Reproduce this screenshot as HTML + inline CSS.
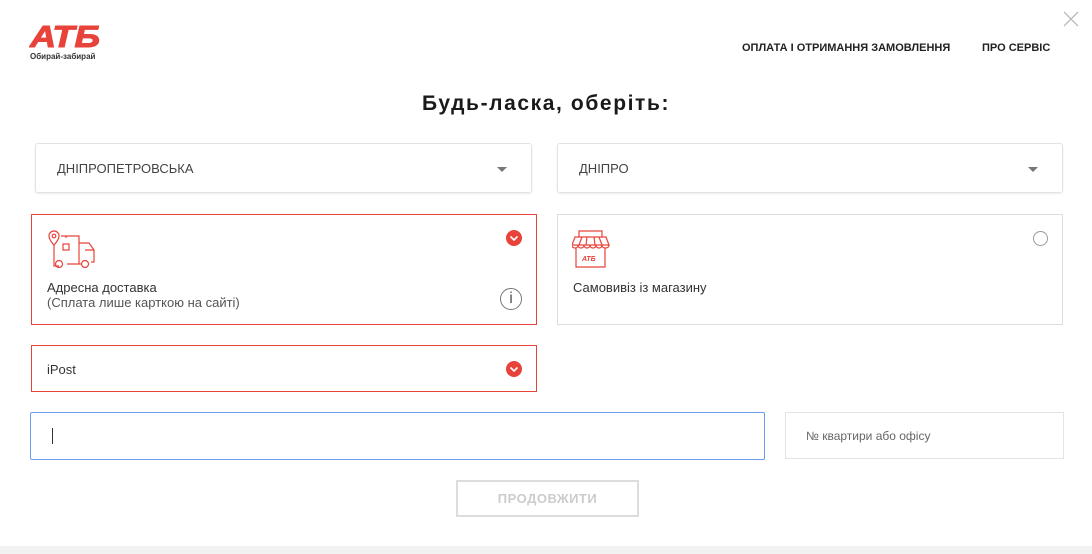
<!DOCTYPE html>
<html><head><meta charset="utf-8"><style>
*{box-sizing:border-box;margin:0;padding:0}
body{width:1092px;height:554px;background:#fff;font-family:"Liberation Sans",sans-serif;color:#333;position:relative;overflow:hidden}
.abs{position:absolute}
.sel{position:absolute;border:1px solid #e3e3e3;border-radius:3px;box-shadow:0 1px 2px rgba(0,0,0,.08);font-size:13px;color:#444;padding-left:21px;display:flex;align-items:center}
.tri{position:absolute;right:24px;top:23px;width:0;height:0;border-left:5px solid transparent;border-right:5px solid transparent;border-top:5px solid #777}
.card{position:absolute;border:1px solid #ddd}
.red{border-color:#e8433a}
.chev{position:absolute;width:16px;height:16px;border-radius:50%;background:#e8433a}
</style></head><body>
<svg class="abs" style="left:29px;top:22px" width="74" height="28" viewBox="0 0 74 28">
<text x="1" y="25" font-family="Liberation Sans" font-weight="bold" font-style="italic" font-size="31" fill="#e8433a" textLength="70" lengthAdjust="spacingAndGlyphs" stroke="#e8433a" stroke-width="1">АТБ</text></svg>
<div class="abs" style="left:30px;top:52px;font-size:8px;font-weight:bold;color:#333">Обирай-забирай</div>
<div class="abs" style="left:742px;top:42px;font-size:11px;font-weight:bold;color:#222">ОПЛАТА І ОТРИМАННЯ ЗАМОВЛЕННЯ</div>
<div class="abs" style="left:982px;top:42px;font-size:11px;font-weight:bold;color:#222">ПРО СЕРВІС</div>
<svg class="abs" style="left:1063px;top:11px" width="16" height="16"><path d="M1 1L15 15M15 1L1 15" stroke="#bbb" stroke-width="1.3"/></svg>
<div class="abs" style="left:0;width:1092px;top:92px;text-align:center;font-size:21px;font-weight:bold;color:#1a1a1a;letter-spacing:1.6px">Будь-ласка, оберіть:</div>
<div class="sel" style="left:35px;top:143px;width:497px;height:50px">ДНІПРОПЕТРОВСЬКА<span class="tri"></span></div>
<div class="sel" style="left:557px;top:143px;width:506px;height:50px">ДНІПРО<span class="tri"></span></div>
<div class="card red" style="left:31px;top:214px;width:506px;height:111px">
<svg class="abs" style="left:15px;top:15px" width="50" height="38" viewBox="0 0 50 38" fill="none" stroke="#e8433a" stroke-width="1.2"><path d="M7 1a5 5 0 0 1 5 5c0 4-5 9-5 9s-5-5-5-9a5 5 0 0 1 5-5z"/><circle cx="7" cy="6" r="1.8"/><path d="M7 15v21h5M19 8v-2h-5M14 6h18v28H20M16 14h6v6h-6zM32 13h10l5 7v12h-3M28 34h7M47 20H38"/><circle cx="12" cy="34" r="3.5"/><circle cx="38" cy="34" r="3.5"/></svg>
<div class="chev" style="left:474px;top:15px"><svg width="16" height="16"><path d="M4.5 6.5L8 10l3.5-3.5" stroke="#fff" stroke-width="1.6" fill="none"/></svg></div>
<div class="abs" style="left:15px;top:65px;font-size:13px;color:#333;line-height:15px">Адресна доставка<br><span style="color:#555">(Сплата лише карткою на сайті)</span></div>
<div class="abs" style="left:468px;top:73px;width:22px;height:22px;border:1px solid #777;border-radius:50%;text-align:center;font-size:16px;line-height:20px;color:#555">i</div>
</div>
<div class="card" style="left:557px;top:214px;width:506px;height:111px">
<svg class="abs" style="left:14px;top:15px" width="38" height="40" viewBox="0 0 38 40" fill="none" stroke="#e8433a" stroke-width="1.2"><path d="M7 1h23v6H7zM3 7h31l3 8H0zM0 15c0 4 6 4 6 0c0 4 6 4 6 0c0 4 6 4 6 0c0 4 6 4 6 0c0 4 6 4 6 0c0 4 7 4 7 0M4 18v19h29V18M10 7l-3 8M15 7l-1 8M22 7l1 8M27 7l3 8"/><text x="10" y="31" font-size="7" font-weight="bold" font-style="italic" fill="#e8433a" stroke="none" font-family="Liberation Sans">АТБ</text></svg>
<div class="abs" style="left:475px;top:16px;width:15px;height:15px;border:1px solid #999;border-radius:50%"></div>
<div class="abs" style="left:15px;top:65px;font-size:13px;color:#333">Самовивіз із магазину</div>
</div>
<div class="card red" style="left:31px;top:345px;width:506px;height:47px">
<div class="abs" style="left:15px;top:16px;font-size:13px">iPost</div>
<div class="chev" style="left:474px;top:15px"><svg width="16" height="16"><path d="M4.5 6.5L8 10l3.5-3.5" stroke="#fff" stroke-width="1.6" fill="none"/></svg></div>
</div>
<div class="abs" style="left:30px;top:412px;width:735px;height:48px;border:1px solid #6a9cf0;border-radius:2px"><div class="abs" style="left:21px;top:15px;width:1px;height:16px;background:#333"></div></div>
<div class="abs" style="left:785px;top:412px;width:279px;height:47px;border:1px solid #e3e3e3"><div class="abs" style="left:20px;top:16px;font-size:12px;color:#666">№ квартири або офісу</div></div>
<div class="abs" style="left:456px;top:480px;width:183px;height:37px;border:2px solid #ddd;text-align:center;line-height:33px;font-size:13px;font-weight:bold;color:#ccc;letter-spacing:.5px">ПРОДОВЖИТИ</div>
<div class="abs" style="left:0;top:546px;width:1092px;height:8px;background:#f2f2f2"></div>
</body></html>
